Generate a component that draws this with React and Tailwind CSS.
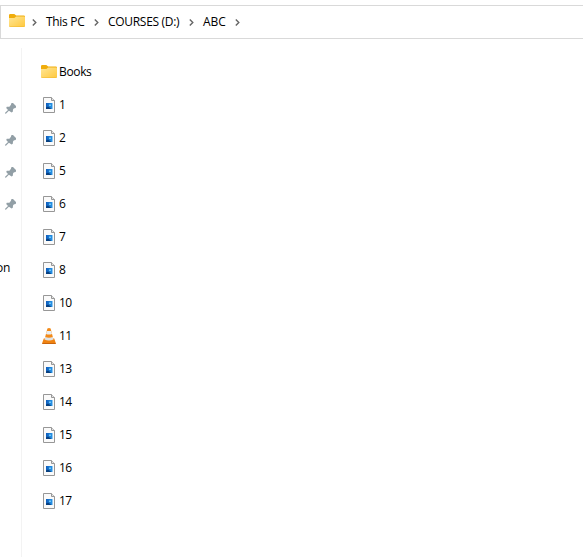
const FILES = ['1', '2', '5', '6', '7', '8', '10', '11', '13', '14', '15', '16', '17'];

function Folder() {
  return (
    <svg className="block h-[13px] w-4" viewBox="0 0 16 13">
      <defs>
        <linearGradient id="folder" x1="0" y1="0" x2="1" y2="1">
          <stop offset="0" stopColor="#ffe696" />
          <stop offset="1" stopColor="#ffc83c" />
        </linearGradient>
      </defs>
      <path d="M0 1.2Q0 0 1.2 0H5.3L7.2 1.5H14.8Q16 1.5 16 2.7V6H0Z" fill="#f0ad0c" />
      <path d="M0 4H5.4L7.2 2.5H15Q16 2.5 16 3.5V11.8Q16 13 14.8 13H1.2Q0 13 0 11.8Z" fill="url(#folder)" />
      <path d="M.4 12.3Q.8 12.7 1.3 12.7H14.7Q15.3 12.7 15.7 12.2" fill="none" stroke="#eeb52e" strokeWidth=".6" />
    </svg>
  );
}

function Picture() {
  return (
    <svg className="block h-4 w-3" viewBox="0 0 12 16">
      <defs>
        <linearGradient id="sky" x1="0" y1="0" x2="1" y2="0">
          <stop offset="0" stopColor="#0d5cbc" />
          <stop offset="1" stopColor="#2a96e8" />
        </linearGradient>
      </defs>
      <path d="M.5 .5H8.5L11.5 3.5V15.5H.5Z" fill="#fafafa" stroke="#979797" />
      <path d="M8.5 .5V3.5H11.5" fill="#e4e4e4" stroke="#979797" />
      <rect x="3" y="6" width="6.5" height="6" fill="url(#sky)" />
      <path d="M3 10.4L5 9.4L8.5 12H3Z" fill="#08407f" />
      <path d="M6 7.5H8V9H6Z" fill="#6cc8f5" />
    </svg>
  );
}

function Cone() {
  return (
    <svg className="block h-4 w-3.5" viewBox="0 0 14 16">
      <path d="M1.8 10.5H12.2L13.8 15Q14 16 13 16H1Q0 16 .2 15Z" fill="#ef8210" />
      <path d="M.2 15H13.8Q14 16 13 16H1Q0 16 .2 15Z" fill="#c9640b" />
      <path d="M5.4 .6Q7 -.4 8.6 .6L11.6 12Q7 14.3 2.4 12Z" fill="#f38a18" />
      <path d="M4.8 3H9.2L10 6Q7 7 4 6Z" fill="#e9edf0" />
      <path d="M3.2 9Q7 10.4 10.8 9L11.5 11.6Q7 13.6 2.5 11.6Z" fill="#dfe3e6" />
    </svg>
  );
}

function Chevron() {
  return (
    <svg className="block h-[7px] w-[5px] shrink-0" viewBox="0 0 5 7" fill="none" stroke="#666" strokeWidth="1.4">
      <path d="M.8 .5L3.8 3.5L.8 6.5" />
    </svg>
  );
}

function Pin() {
  return (
    <svg className="block h-[11px] w-[11px]" viewBox="0 0 11 11" fill="#929fa6">
      <path d="M6.5 0L8 0L11 3V4.4L10 5.2L9 5.2L8 6.5L7.8 8.8L6.6 9.6L3.9 7.8L.9 10.7L.1 10.5L.1 9.7L3 7L1.2 5L1.8 3.8L4.4 3.8L5.8 2Z" />
    </svg>
  );
}

export default function App() {
  return (
    <div className="flex h-[557px] w-[583px] flex-col overflow-hidden bg-white pt-[5px] font-['Open_Sans',sans-serif] text-[12px] leading-4 text-black">
      <header className="flex h-[34px] shrink-0 items-center border-y border-l border-[#d9d9d9] pl-2 whitespace-nowrap">
        <div className="w-[23px] pb-[3px]"><Folder /></div>
        <div className="w-3.5 pt-px"><Chevron /></div>
        <span className="w-12 tracking-[-0.3px]">This PC</span>
        <div className="w-3.5 pt-px"><Chevron /></div>
        <span className="w-[81px] tracking-[-0.3px]">COURSES (D:)</span>
        <div className="w-3.5 pt-px"><Chevron /></div>
        <span className="w-8 tracking-[-0.1px]">ABC</span>
        <div className="pt-px"><Chevron /></div>
      </header>
      <main className="flex flex-1 pt-[9px]">
        <aside className="w-[22px] shrink-0 border-r border-[#f3f3f3] pt-11">
          {[0, 1, 2, 3].map((pin) => (
            <div key={pin} className="flex h-8 items-center pl-[5px]"><Pin /></div>
          ))}
          <div className="mt-8 flex h-8 w-[10px] items-center justify-end tracking-[-0.3px]">on</div>
        </aside>
        <section className="pt-[7px] pl-[19px]">
          <div className="flex h-[33px] items-center">
            <span className="w-[18px]"><Folder /></span>
            <span className="tracking-[-0.35px]">Books</span>
          </div>
          {FILES.map((name) => (
            <div key={name} className="flex h-[33px] items-center">
              <span className="flex w-[18px] pl-0.5">
                {name === '11' ? <span className="-ml-px"><Cone /></span> : <Picture />}
              </span>
              <span className="tracking-[-0.6px]">{name}</span>
            </div>
          ))}
        </section>
      </main>
    </div>
  );
}
